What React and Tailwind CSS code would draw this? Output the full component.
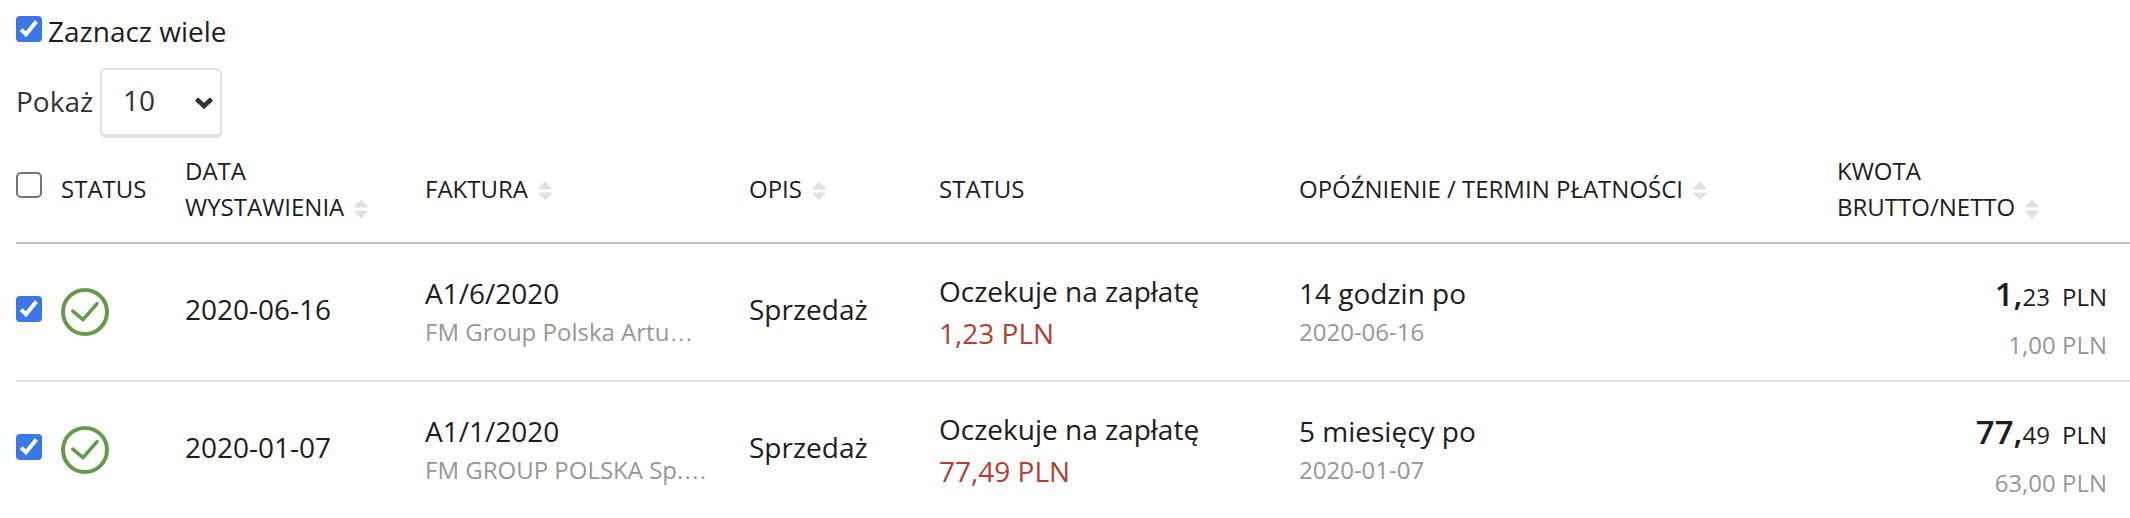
const FONT = "font-['Open_Sans','Noto_Sans',sans-serif]";

const rows = [
  { id: 1, date: "2020-06-16", invoice: "A1/6/2020", client: "FM Group Polska Artu", due: "1,23 PLN", delay: "14 godzin po", term: "2020-06-16", whole: "1,", cents: "23", net: "1,00 PLN" },
  { id: 2, date: "2020-01-07", invoice: "A1/1/2020", client: "FM GROUP POLSKA Sp.", due: "77,49 PLN", delay: "5 miesięcy po", term: "2020-01-07", whole: "77,", cents: "49", net: "63,00 PLN" },
];

function Checkbox({ id, label, defaultChecked }) {
  return (
    <span className="grid size-[26px] shrink-0">
      <input
        id={id}
        type="checkbox"
        aria-label={label}
        defaultChecked={defaultChecked}
        className="peer col-start-1 row-start-1 size-[26px] appearance-none rounded-[5px] border-2 border-[#767676] bg-white checked:rounded-[4px] checked:border-0 checked:bg-[#3b78e7]"
      />
      <svg viewBox="0 0 26 26" className="pointer-events-none invisible col-start-1 row-start-1 size-[26px] peer-checked:visible" fill="none" stroke="#fff" strokeWidth="4" aria-hidden="true">
        <path d="M5.2 13.6 10 18.2 20.4 5.6" />
      </svg>
    </span>
  );
}

function SortIcon() {
  return (
    <svg viewBox="0 0 14 20" className="h-5 w-[14px]" fill="#e1e1e1" aria-hidden="true">
      <path d="M7 .5 13.6 7.2Q14 8.4 13 8.4H1Q0 8.4 .4 7.2ZM7 19.2 13.6 12.8Q14 11.5 13 11.5H1Q0 11.5 .4 12.8Z" />
    </svg>
  );
}

function Heading({ lines, sortable }) {
  return (
    <div className="flex h-[72px] items-center">
      {sortable ? (
        <button type="button" className="flex items-end gap-[10px] text-left">
          <span>
            {lines.map((line) => (
              <span key={line} className="block whitespace-nowrap">{line}</span>
            ))}
          </span>
          <span className="pb-1.5">
            <SortIcon />
          </span>
        </button>
      ) : (
        lines[0]
      )}
    </div>
  );
}

function StatusIcon() {
  return (
    <svg viewBox="0 0 48 48" className="size-12" fill="none" stroke="#649b4b" strokeWidth="4" role="img" aria-label="Wystawiona">
      <circle cx="24" cy="24" r="22" />
      <path d="M11.8 23.2 22 31.6 36 15.6" strokeWidth="3.6" strokeLinecap="round" strokeLinejoin="round" />
    </svg>
  );
}

export default function App() {
  return (
    <main className={`${FONT} bg-white pt-4 pl-4 text-[28px] leading-[42px] text-[#1d1d1b]`}>
      <div className="flex h-[52px] items-start gap-[6px]">
        <Checkbox id="select-many" defaultChecked />
        <label htmlFor="select-many" className="-mt-1.5">Zaznacz wiele</label>
      </div>
      <div className="flex items-center gap-[7px] text-[#333]">
        <label htmlFor="page-size" className="pb-1">Pokaż</label>
        <div className="grid">
          <select id="page-size" defaultValue="10" className="col-start-1 row-start-1 h-[70px] w-[122px] appearance-none rounded-md border-2 border-b-4 border-[#e1e1e1] bg-white pb-1 pl-[21px]">
            <option>10</option>
            <option>25</option>
            <option>50</option>
          </select>
          <svg viewBox="0 0 18 12" className="pointer-events-none col-start-1 row-start-1 mr-[9px] h-3 w-[18px] self-center justify-self-end" fill="none" stroke="#333" strokeWidth="4.6" aria-hidden="true">
            <path d="M1.4 2 9 9 16.6 2" />
          </svg>
        </div>
      </div>

      <table className="w-full table-fixed border-collapse text-left">
        <colgroup>
          <col className="w-[45px]" />
          <col className="w-[124px]" />
          <col className="w-[240px]" />
          <col className="w-[324px]" />
          <col className="w-[190px]" />
          <col className="w-[360px]" />
          <col />
          <col className="w-[293px]" />
        </colgroup>
        <thead>
          <tr className="h-[105px] border-b-2 border-[#c3c3c3] text-2xl leading-9 [&>th]:p-0 [&>th]:pb-[17px] [&>th]:align-bottom [&>th]:font-normal">
            <th>
              <div className="flex h-[72px] items-center pb-2">
                <Checkbox id="select-all" label="Zaznacz wszystkie" />
              </div>
            </th>
            <th><Heading lines={["STATUS"]} /></th>
            <th><Heading sortable lines={["DATA", "WYSTAWIENIA"]} /></th>
            <th><Heading sortable lines={["FAKTURA"]} /></th>
            <th><Heading sortable lines={["OPIS"]} /></th>
            <th><Heading lines={["STATUS"]} /></th>
            <th><Heading sortable lines={["OPÓŹNIENIE / TERMIN PŁATNOŚCI"]} /></th>
            <th><Heading sortable lines={["KWOTA", "BRUTTO/NETTO"]} /></th>
          </tr>
        </thead>
        <tbody>
          {rows.map((row) => (
            <tr key={row.id} className="h-[138px] border-b-2 border-[#e1e1e1] last:h-[137px] last:border-b-0 [&>td]:p-0 [&>td]:align-middle">
              <td><div className="pb-1.5"><Checkbox id={`row-${row.id}`} label={`Zaznacz ${row.invoice}`} defaultChecked /></div></td>
              <td><StatusIcon /></td>
              <td><div className="pb-1.5">{row.date}</div></td>
              <td>
                <div className="pb-0.5">{row.invoice}
                  <div className="text-2xl leading-9 text-[#979797]">{row.client}<span className="font-['Liberation_Sans',sans-serif]">…</span></div>
                </div>
              </td>
              <td><div className="pb-1.5">Sprzedaż</div></td>
              <td>
                Oczekuje na zapłatę
                <div className="text-[#b33f32]">{row.due}</div>
              </td>
              <td>
                <div className="pb-0.5">{row.delay}
                  <div className="text-2xl leading-9 text-[#979797]">{row.term}</div>
                </div>
              </td>
              <td>
                <div className="pt-3.5 pr-[23px] text-right text-2xl leading-[48px]">
                  <div className="flex items-baseline justify-end">
                    <span className="text-[33px] font-semibold">{row.whole}</span>
                    <span>{row.cents}</span>
                    <span className="ml-3">PLN</span>
                  </div>
                  <div className="text-[#979797]">{row.net}</div>
                </div>
              </td>
            </tr>
          ))}
        </tbody>
      </table>
    </main>
  );
}
